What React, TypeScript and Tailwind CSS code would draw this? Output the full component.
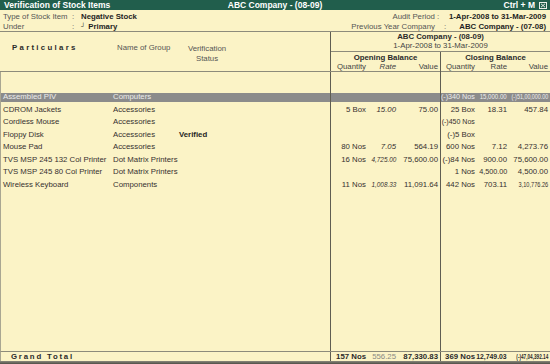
import React from "react";

type Cell = { t: string; sq?: string; it?: boolean };

type Item = {
  name: string;
  group: string;
  status?: string;
  open: Cell[];
  close: Cell[];
  sel?: boolean;
};

const items: Item[] = [
  {
    name: "Assembled PIV",
    group: "Computers",
    open: [],
    close: [
      { t: "(-)340 Nos", sq: "[transform:scaleX(0.92)]" },
      { t: "15,000.00", sq: "[transform:scaleX(0.78)]" },
      { t: "(-)51,00,000.00", sq: "[transform:scaleX(0.69)]" },
    ],
    sel: true,
  },
  {
    name: "CDROM Jackets",
    group: "Accessories",
    open: [{ t: "5 Box" }, { t: "15.00", it: true }, { t: "75.00" }],
    close: [{ t: "25 Box" }, { t: "18.31" }, { t: "457.84" }],
  },
  {
    name: "Cordless Mouse",
    group: "Accessories",
    open: [],
    close: [{ t: "(-)450 Nos", sq: "[transform:scaleX(0.9)]" }],
  },
  {
    name: "Floppy Disk",
    group: "Accessories",
    status: "Verified",
    open: [],
    close: [{ t: "(-)5 Box" }],
  },
  {
    name: "Mouse Pad",
    group: "Accessories",
    open: [{ t: "80 Nos" }, { t: "7.05", it: true }, { t: "564.19" }],
    close: [{ t: "600 Nos" }, { t: "7.12" }, { t: "4,273.76" }],
  },
  {
    name: "TVS MSP 245 132 Col Printer",
    group: "Dot Matrix Printers",
    open: [{ t: "16 Nos" }, { t: "4,725.00", it: true, sq: "[transform:scaleX(0.82)]" }, { t: "75,600.00" }],
    close: [{ t: "(-)84 Nos" }, { t: "900.00" }, { t: "75,600.00" }],
  },
  {
    name: "TVS MSP 245 80 Col Printer",
    group: "Dot Matrix Printers",
    open: [],
    close: [{ t: "1 Nos" }, { t: "4,500.00", sq: "[transform:scaleX(0.93)]" }, { t: "4,500.00" }],
  },
  {
    name: "Wireless Keyboard",
    group: "Components",
    open: [{ t: "11 Nos" }, { t: "1,008.33", it: true, sq: "[transform:scaleX(0.82)]" }, { t: "11,091.64" }],
    close: [{ t: "442 Nos" }, { t: "703.11" }, { t: "3,10,776.26", sq: "[transform:scaleX(0.72)]" }],
  },
];

function Num({ c }: { c?: Cell }) {
  if (!c) return <div />;
  return (
    <div className="flex justify-end whitespace-nowrap">
      <span className={`shrink-0 inline-block origin-right ${c.it ? "italic" : ""} ${c.sq ?? ""}`}>{c.t}</span>
    </div>
  );
}

function Row({ item, className }: { item?: Item; className: string }) {
  const sel = item?.sel;
  return (
    <div
      className={`flex ${className} ${
        sel
          ? "text-[#ececec] bg-[linear-gradient(to_bottom,transparent_1.5px,#8b8b8b_1.5px,#8b8b8b_11px,transparent_11px)]"
          : ""
      }`}
    >
      <div className="w-[112px] pl-[2px] flex items-center whitespace-nowrap">{item?.name}</div>
      <div className="w-[66px] flex items-center whitespace-nowrap">{item?.group}</div>
      <div className="flex-1 flex items-center font-bold text-[#1e1e1e]">{item?.status}</div>
      <div className="w-[110px] border-l border-[#5f5d52] grid grid-cols-[35px_30px_42px] items-center">
        <Num c={item?.open[0]} />
        <Num c={item?.open[1]} />
        <Num c={item?.open[2]} />
      </div>
      <div className="w-[110px] border-l border-[#5f5d52] grid grid-cols-[34px_32px_41px] items-center">
        <Num c={item?.close[0]} />
        <Num c={item?.close[1]} />
        <Num c={item?.close[2]} />
      </div>
    </div>
  );
}

export default function App() {
  return (
    <div className="w-[550px] h-[364px] overflow-hidden bg-[#fbf3c6] flex flex-col font-['Liberation_Sans',Arial,sans-serif] text-[7.8px] leading-none text-[#363030]">
      {/* title bar */}
      <div className="h-[10px] bg-[#215e4c] text-white font-bold text-[8.5px] flex items-center px-[4px] shrink-0">
        <div className="flex-1">Verification of Stock Items</div>
        <div>ABC Company - (08-09)</div>
        <div className="flex-1 flex justify-end items-center gap-[4px]">
          <span>Ctrl + M</span>
          <svg width="8" height="7" viewBox="0 0 8 7" className="mr-[-1px]">
            <rect x="0.5" y="0.5" width="7" height="6" fill="none" stroke="#e8eee8" />
            <path d="M2 1.8 L6 5.2 M6 1.8 L2 5.2" stroke="#e8eee8" strokeWidth="1" />
          </svg>
        </div>
      </div>

      {/* info */}
      <div className="h-[22px] shrink-0 border-b border-[#8d8b7b] flex justify-between pl-[3px] pr-[4px] pt-[2px]">
        <div className="grid grid-cols-[69px_9px_auto] auto-rows-[10px] items-center">
          <div className="text-[#555]">Type of Stock Item</div>
          <div className="text-[#555]">:</div>
          <div className="font-bold text-[#1e1e1e]">Negative Stock</div>
          <div className="text-[#555]">Under</div>
          <div className="text-[#555]">:</div>
          <div className="font-bold text-[#1e1e1e] flex items-center">
            <span className="text-[6px] font-normal mr-[3px] -translate-y-[1px]">┘</span>Primary
          </div>
        </div>
        <div className="grid grid-cols-[auto_14px_auto] auto-rows-[10px] items-center">
          <div className="text-right text-[#555]">Audit Period</div>
          <div className="text-[#555] pl-[2px]">:</div>
          <div className="text-right font-bold text-[#1e1e1e]">1-Apr-2008 to 31-Mar-2009</div>
          <div className="text-right text-[#555]">Previous Year Company</div>
          <div className="text-[#555] pl-[9px]">:</div>
          <div className="text-right font-bold text-[#1e1e1e]">ABC Company - (07-08)</div>
        </div>
      </div>

      {/* column headers */}
      <div className="h-[40px] shrink-0 border-b border-[#8d8b7b] flex">
        <div className="w-[330px] flex pt-[12px] pl-[1px]">
          <div className="w-[112px] pl-[11px] font-bold tracking-[2.3px] text-[#2a2a2a]">Particulars</div>
          <div className="w-[66px] pl-[4px] text-[#555]">Name of Group</div>
          <div className="w-[56px] text-center text-[#555] leading-[10px]">
            Verification
            <br />
            Status
          </div>
        </div>
        <div className="flex-1 border-l border-[#5f5d52] flex flex-col">
          <div className="h-[20px] border-b border-[#8d8b7b] flex flex-col items-center justify-center leading-[9.5px] pb-[1px]">
            <div className="font-bold text-[#2a2a2a]">ABC Company - (08-09)</div>
            <div className="text-[#444]">1-Apr-2008 to 31-Mar-2009</div>
          </div>
          <div className="flex-1 flex">
            <div className="w-[109px] flex flex-col pt-[1px]">
              <div className="h-[9px] flex items-center justify-center font-bold text-[#2a2a2a]">Opening Balance</div>
              <div className="h-[10px] grid grid-cols-[35px_30px_42px] items-center text-[#444]">
                <div className="text-right">Quantity</div>
                <div className="text-right italic">Rate</div>
                <div className="text-right">Value</div>
              </div>
            </div>
            <div className="flex-1 border-l border-[#5f5d52] flex flex-col pt-[1px]">
              <div className="h-[9px] flex items-center justify-center font-bold text-[#2a2a2a]">Closing Balance</div>
              <div className="h-[10px] grid grid-cols-[34px_32px_41px] items-center text-[#444]">
                <div className="text-right">Quantity</div>
                <div className="text-right">Rate</div>
                <div className="text-right">Value</div>
              </div>
            </div>
          </div>
        </div>
      </div>

      {/* body */}
      <div className="flex-1 flex flex-col border-l border-[#a9a692]">
        <Row className="h-[19px]" />
        {items.map((it) => (
          <Row key={it.name} item={it} className="h-[12.5px]" />
        ))}
        <Row className="flex-1" />
      </div>

      {/* grand total */}
      <div className="h-[10px] shrink-0 border-t border-l border-t-[#8d8b7b] border-l-[#a9a692] flex">
        <div className="w-[329px] pl-[10px] flex items-center font-bold tracking-[1.8px] text-[#2a2a2a]">Grand Total</div>
        <div className="w-[110px] border-l border-[#5f5d52] grid grid-cols-[35px_30px_42px] items-center">
          <div className="text-right font-bold text-[#2a2a2a]">157 Nos</div>
          <div className="text-right text-[#8a8a84]">556.25</div>
          <div className="text-right font-bold text-[#2a2a2a]">87,330.83</div>
        </div>
        <div className="w-[110px] border-l border-[#5f5d52] grid grid-cols-[34px_32px_41px] items-center font-bold text-[#2a2a2a]">
          <div className="text-right">369 Nos</div>
          <div className="flex justify-end whitespace-nowrap">
            <span className="shrink-0 inline-block origin-right [transform:scaleX(0.88)]">12,749.03</span>
          </div>
          <div className="flex justify-end whitespace-nowrap">
            <span className="shrink-0 inline-block origin-right [transform:scaleX(0.6)]">(-)47,04,392.14</span>
          </div>
        </div>
      </div>
      <div className="h-[3px] shrink-0 bg-[linear-gradient(to_bottom,#8a897c,#4f4e46)]" />
    </div>
  );
}
